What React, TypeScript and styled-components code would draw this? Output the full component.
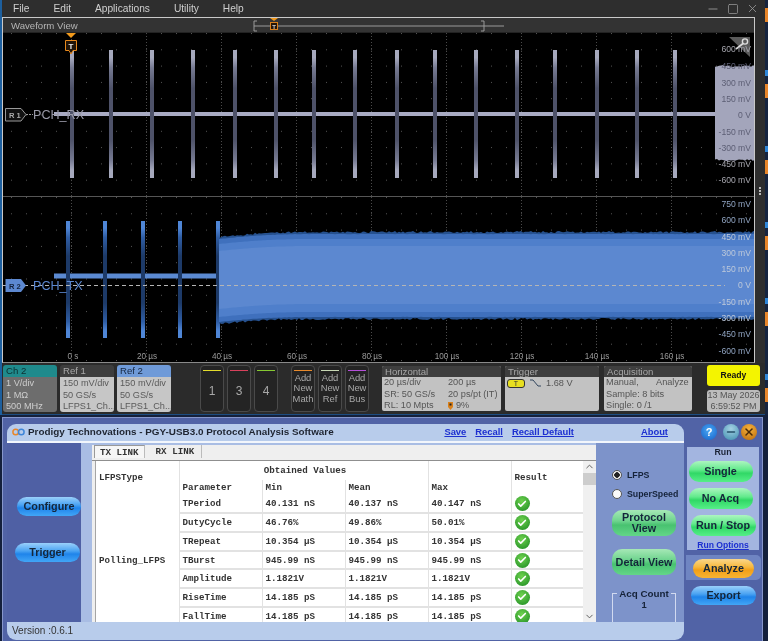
import styled, { createGlobalStyle } from "styled-components";
import { Check, ChevronDown, ChevronUp, Minus, Square, X } from "lucide-react";

const GlobalStyle = createGlobalStyle`
  html, body { margin: 0; padding: 0; background: #14203c; }
  * { box-sizing: border-box; }
`;

const Screen = styled.div`
  width: 768px;
  height: 641px;
  overflow: hidden;
  background: #14203c;
  font-family: "Liberation Sans", Arial, sans-serif;
  filter: blur(0.4px);
`;

/* ---------- scope window ---------- */
const TopRow = styled.div`
  display: flex;
  height: 415px;
`;

const ScopeWindow = styled.div`
  width: 765px;
  display: flex;
  flex-direction: column;
  background: #2e2e2e;
  border-left: 2px solid #1d5f9e;
`;

const DesktopStrip = styled.div`
  flex: 1;
  background: repeating-linear-gradient(
    180deg,
    #16243f 0 8px,
    #e8862a 8px 22px,
    #16243f 22px 70px,
    #2f86d8 70px 76px
  );
`;

const MenuBar = styled.div`
  height: 17px;
  display: flex;
  align-items: center;
  gap: 24px;
  padding: 0 6px 0 11px;
  color: #cfcfcf;
  font-size: 10.2px;
`;

const WindowControls = styled.div`
  margin-left: auto;
  display: flex;
  align-items: center;
  gap: 7px;
  color: #9a9a9a;
`;

const ScopeMiddle = styled.div`
  display: flex;
  height: 346px;
`;

const WavePanel = styled.div`
  width: 753px;
  display: flex;
  flex-direction: column;
  border: 1px solid #c9c9c9;
  border-bottom-color: #8a8a8a;
  background: #000;
`;

const WaveTitle = styled.div`
  height: 15px;
  flex: none;
  display: flex;
  align-items: center;
  padding-left: 8px;
  background: #333;
  color: #b5b5b5;
  font-size: 9.6px;
  border-bottom: 1px solid #222;
`;

const Overview = styled.svg`
  margin-left: 175px;
`;

const PlotSvg = styled.svg`
  display: block;
  flex: none;
`;

const PlotDivider = styled.div`
  height: 1px;
  flex: none;
  background: #555;
`;

const Gutter = styled.div`
  flex: 1;
  display: flex;
  flex-direction: column;
  align-items: center;
  justify-content: flex-end;
  gap: 1px;
  padding-bottom: 168px;
`;

const GutterDot = styled.span`
  width: 2px;
  height: 2px;
  background: #bbb;
`;

/* ---------- status strip under the waveforms ---------- */
const StatusStrip = styled.div`
  height: 52px;
  display: flex;
  align-items: center;
  padding-left: 1px;
  background: #2b2b2b;
  border-bottom: 1px solid #1c4c80;
  color: #555;
  font-size: 9.2px;
`;

const BadgeGroup = styled.div<{ $left?: number; $gap?: number }>`
  display: flex;
  gap: ${(p) => p.$gap ?? 3}px;
  margin-left: ${(p) => p.$left ?? 0}px;
`;

const Badge = styled.div`
  width: 54px;
  height: 47px;
  border-radius: 3px;
  overflow: hidden;
  display: flex;
  flex-direction: column;
`;

const BadgeHead = styled.div<{ $bg: string; $color: string }>`
  height: 12px;
  padding: 0 3px;
  background: ${(p) => p.$bg};
  color: ${(p) => p.$color};
  line-height: 12px;
  font-size: 9.6px;
`;

const BadgeBody = styled.div<{ $dark?: boolean }>`
  flex: 1;
  padding: 1px 3px 0;
  background: ${(p) => (p.$dark ? "#6d6d6d" : "#c6c6c6")};
  color: ${(p) => (p.$dark ? "#cdcdcd" : "#5a5a5a")};
  line-height: 11.5px;
  white-space: nowrap;
  overflow: hidden;
  display: flex;
  flex-direction: column;
`;

const ChannelKey = styled.button<{ $bar: string }>`
  width: 24px;
  height: 47px;
  padding: 4px 2px 0;
  border: 1px solid #4a4a4a;
  border-radius: 4px;
  background: #242424;
  color: #a8a8a8;
  font: inherit;
  display: flex;
  flex-direction: column;
  align-items: center;
  text-align: center;

  &::before {
    content: "";
    width: 18px;
    height: 1px;
    flex: none;
    background: ${(p) => p.$bar};
  }
`;

const KeyNumber = styled.span`
  margin-top: 13px;
  font-size: 12px;
`;

const KeyLabel = styled.span`
  margin-top: 2px;
  font-size: 9.4px;
  line-height: 10.4px;
`;

const InfoPanel = styled.div<{ $w: number; $left: number }>`
  width: ${(p) => p.$w}px;
  height: 45px;
  margin-left: ${(p) => p.$left}px;
  border-radius: 2px;
  overflow: hidden;
  background: #c2c2c2;
  display: flex;
  flex-direction: column;
`;

const InfoHead = styled.div`
  height: 11px;
  padding: 0 3px;
  background: #3e3e3e;
  color: #a6a6a6;
  font-size: 9.6px;
  line-height: 11px;
`;

const InfoGrid = styled.div<{ $cols: string }>`
  display: grid;
  grid-template-columns: ${(p) => p.$cols};
  grid-auto-rows: 11.5px;
  padding: 0 2px;
  line-height: 11.5px;
  white-space: nowrap;
`;

const InfoCell = styled.span`
  display: flex;
  align-items: center;
  gap: 3px;
`;

const TriggerRow = styled.div`
  display: flex;
  align-items: center;
  padding: 1px 2px 0;
  gap: 5px;
`;

const TriggerPill = styled.span`
  width: 18px;
  height: 9px;
  border: 1px solid #333;
  border-radius: 3px;
  background: #e8df20;
  color: #333;
  font-size: 7px;
  line-height: 7px;
  text-align: center;
`;

const ReadyColumn = styled.div`
  width: 53px;
  margin-left: 15px;
  display: flex;
  flex-direction: column;
  gap: 4px;
`;

const ReadyBox = styled.div`
  height: 21px;
  border-radius: 3px;
  background: #f4f400;
  color: #111;
  font-size: 8.6px;
  font-weight: bold;
  line-height: 21px;
  text-align: center;
`;

const ClockBox = styled.div`
  height: 22px;
  border-radius: 3px;
  background: #bcbcbc;
  font-size: 9px;
  line-height: 11px;
  text-align: center;
  white-space: nowrap;
`;

/* ---------- protocol analysis window ---------- */
const ProdigyWindow = styled.div`
  width: 761px;
  height: 224px;
  margin: 2px 0 0 2px;
  padding: 6px 0 0 4px;
  display: flex;
  background: #5163a6;
  border: 1px solid #8696cb;
  border-bottom: none;
`;

const Client = styled.div`
  width: 677px;
  height: 216px;
  flex: none;
  display: flex;
  flex-direction: column;
  border-radius: 9px;
  overflow: hidden;
  background: #b8cceb;
`;

const TitleBar = styled.div`
  height: 19px;
  flex: none;
  display: flex;
  align-items: center;
  padding: 0 16px 2px 5px;
  border-bottom: 2px solid #f2f6fc;
`;

const AppTitle = styled.span`
  margin-left: 3px;
  color: #1e2430;
  font-size: 9.9px;
  font-weight: bold;
  white-space: nowrap;
`;

const TopLinks = styled.div`
  margin-left: auto;
  display: flex;
  gap: 9px;
`;

const LinkText = styled.a<{ $left?: number }>`
  margin-left: ${(p) => p.$left ?? 0}px;
  color: #1c2fd0;
  font-size: 9.4px;
  font-weight: bold;
  text-decoration: underline;
  white-space: nowrap;
`;

const ClientBody = styled.div`
  height: 179px;
  flex: none;
  display: flex;
  background: #a9bde4;
`;

const SideBar = styled.div`
  width: 74px;
  flex: none;
  display: flex;
  flex-direction: column;
  align-items: flex-start;
  padding: 54px 0 0 8px;
  gap: 27px;
  background: #4f60a4;
`;

const GlossButton = styled.button<{ $tone: "blue" | "green" | "bright" | "orange"; $w: number; $h?: number; $shift?: number }>`
  width: ${(p) => p.$w}px;
  height: ${(p) => p.$h ?? 19}px;
  flex: none;
  padding: 0;
  margin-left: ${(p) => p.$shift ?? 0}px;
  border: none;
  border-radius: 10px;
  color: #14263a;
  font-family: inherit;
  font-size: 10.8px;
  font-weight: bold;
  line-height: 11px;
  text-align: center;
  background: ${(p) =>
    p.$tone === "blue"
      ? "linear-gradient(#9ad0fb 0, #4aa3f2 42%, #1f84ea 58%, #42a6f6 100%)"
      : p.$tone === "green"
        ? "linear-gradient(#a6e8b6 0, #6fd48f 42%, #48c270 58%, #63d688 100%)"
        : p.$tone === "bright"
          ? "linear-gradient(#adf5c0 0, #62ea8c 42%, #31d866 58%, #56ef88 100%)"
          : "linear-gradient(#fbd78a 0, #f7b93f 42%, #f29f18 58%, #f8b432 100%)"};
`;

const Margin = styled.div`
  width: 11px;
  flex: none;
`;

const TabPanel = styled.div`
  width: 504px;
  flex: none;
  margin-top: 2px;
  display: flex;
  flex-direction: column;
  background: #efefef;
`;

const TabRow = styled.div`
  height: 16px;
  flex: none;
  display: flex;
  padding: 0 0 0 2px;
  gap: 4px;
  border-bottom: 1px solid #8f8f8f;
`;

const Tab = styled.span<{ $active?: boolean }>`
  height: 13px;
  padding: 0 ${(p) => (p.$active ? 5 : 7)}px;
  border-top: ${(p) => (p.$active ? "1px solid #999" : "none")};
  border-left: ${(p) => (p.$active ? "1px solid #999" : "none")};
  border-right: 1px solid #bbb;
  background: ${(p) => (p.$active ? "#f6f6f6" : "transparent")};
  color: #333;
  font-family: "Liberation Mono", "Courier New", monospace;
  font-size: 9.2px;
  font-weight: bold;
  line-height: 13px;
`;

const TableArea = styled.div`
  margin-left: 3px;
  height: 161px;
  display: flex;
  background: #fff;
  border-left: 1px solid #a5a5a5;
  overflow: hidden;
`;

const DataTable = styled.table`
  width: 487px;
  flex: none;
  table-layout: fixed;
  align-self: flex-start;
  border-collapse: collapse;
  color: #333;
  font-family: "Liberation Mono", "Courier New", monospace;
  font-size: 9.2px;
  font-weight: bold;
`;

const Cell = styled.td<{ $h?: number; $center?: boolean; $top?: number }>`
  height: ${(p) => p.$h ?? 18.7}px;
  padding: ${(p) => p.$top ?? 0}px 0 0 3px;
  text-align: ${(p) => (p.$center ? "center" : "left")};
  vertical-align: middle;
  border-left: 1px solid #e2e2e2;
  border-bottom: 2px solid #e2e2e2;
  white-space: nowrap;
`;

const HeadCell = styled(Cell)`
  border-bottom: none;
`;

const SpanCell = styled(Cell)`
  border-left: none;
  border-bottom: none;
`;

const PassDot = styled.span`
  display: block;
  width: 15px;
  height: 15px;
  border-radius: 50%;
  display: flex;
  align-items: center;
  justify-content: center;
  background: radial-gradient(circle at 45% 35%, #6fd24f, #2e9a2c 75%);
  color: #fff;
`;

const ScrollTrack = styled.div`
  width: 13px;
  flex: none;
  display: flex;
  flex-direction: column;
  align-items: center;
  background: #f0f0f0;
  color: #555;
`;

const ScrollThumb = styled.div`
  width: 100%;
  height: 12px;
  margin-top: 1px;
  background: #cdcdcd;
`;

const ScrollFill = styled.div`
  flex: 1;
`;

const OptionsPanel = styled.div`
  width: 88px;
  flex: none;
  overflow: hidden;
  display: flex;
  flex-direction: column;
  align-items: flex-start;
  padding: 27px 0 0 16px;
  background: #7d93ca;
`;

const RadioRow = styled.label<{ $gap?: number }>`
  display: flex;
  align-items: center;
  gap: 5px;
  margin-bottom: ${(p) => p.$gap ?? 0}px;
  color: #15233a;
  font-size: 8.8px;
  font-weight: bold;
`;

const RadioMark = styled.span<{ $on?: boolean }>`
  width: 10px;
  height: 10px;
  flex: none;
  border-radius: 50%;
  border: 1px solid #555;
  background: ${(p) => (p.$on ? "radial-gradient(circle, #222 0 2.5px, #f4f4f4 3px)" : "#fafafa")};
`;

const AcqFieldset = styled.fieldset`
  width: 64px;
  height: 40px;
  flex: none;
  margin: 13px 0 0;
  padding: 0;
  border: 1px solid #d2daf0;
  text-align: center;
  color: #152238;
  font-size: 9.4px;
  font-weight: bold;
`;

const AcqLegend = styled.legend`
  margin: 0 auto;
  padding: 0 2px;
  font-size: 9.8px;
  white-space: nowrap;
`;

const StatusBar = styled.div`
  height: 18px;
  flex: none;
  padding-left: 5px;
  color: #333;
  font-size: 10px;
  line-height: 18px;
`;

const RightColumn = styled.div`
  flex: 1;
  display: flex;
  flex-direction: column;
  align-items: flex-start;
`;

const HelpRow = styled.div`
  height: 23px;
  flex: none;
  display: flex;
  align-items: flex-start;
  padding: 0 0 0 17px;
`;

const RoundIcon = styled.span<{ $bg: string; $left?: number }>`
  width: 16px;
  height: 16px;
  margin-left: ${(p) => p.$left ?? 0}px;
  border-radius: 50%;
  display: flex;
  align-items: center;
  justify-content: center;
  background: ${(p) => p.$bg};
  color: #fff;
  font-size: 11px;
  font-weight: bold;
`;

const RunPanel = styled.div`
  width: 72px;
  height: 103px;
  margin-left: 3px;
  padding-top: 1px;
  display: flex;
  flex-direction: column;
  align-items: center;
  background: #a3b5e0;
  color: #1b2436;
  font-size: 8.8px;
`;

const RunTitle = styled.span`
  height: 13px;
  line-height: 9px;
  font-weight: bold;
`;

const RunStack = styled.div`
  display: flex;
  flex-direction: column;
  gap: 6px;
`;

const RunOptions = styled(LinkText)`
  margin-top: 4px;
  font-size: 8.6px;
`;

const AnalyzeBand = styled.div`
  width: 75px;
  height: 25px;
  margin: 5px 0 0 2px;
  padding: 3px 0 0 7px;
  border-radius: 0 5px 5px 0;
  background: #6f85c2;
`;

/* ---------- waveform drawing helpers ---------- */
const noise = (i: number) => {
  const v = Math.sin(i * 12.9898) * 43758.5453;
  return v - Math.floor(v);
};

const edge = (x0: number, x1: number, y0: number, y1: number, seed: number, amp: number) => {
  const pts: string[] = [];
  for (let x = x0; x <= x1; x += 2) {
    const t = Math.min(1, (x - x0) / 90);
    const base = y0 + (y1 - y0) * t * (2 - t);
    pts.push(`${x},${(base + (noise(x + seed) - 0.5) * amp).toFixed(1)}`);
  }
  return pts;
};

const band = (top: [number, number], bottom: [number, number], amp: number, seed: number) => {
  const a = edge(219, 755, top[0], top[1], seed, amp);
  const b = edge(219, 755, bottom[0], bottom[1], seed + 7, amp).reverse();
  return [...a, ...b].join(" ");
};

const gridLines = [71, 146, 221, 296, 371, 446, 521, 596, 671];

function PlotGrid({ id, y, h }: { id: string; y: number; h: number }) {
  return (
    <>
      <defs>
        <pattern id={id} x="11" y={y % 16.3} width="15" height="16.3" patternUnits="userSpaceOnUse">
          <rect width="1" height="1" fill="#555" />
        </pattern>
      </defs>
      <rect x="2" y={y} width="753" height={h} fill={`url(#${id})`} />
      {gridLines.map((x) => (
        <line key={x} x1={x + 0.5} x2={x + 0.5} y1={y} y2={y + h} stroke="#4a4a4a" strokeDasharray="1 2" />
      ))}
    </>
  );
}

function PulseGradient({ id, end, mid, dark }: { id: string; end: string; mid: string; dark: string }) {
  return (
    <linearGradient id={id} x1="0" x2="0" y1="0" y2="1">
      <stop offset="0" stopColor={end} />
      <stop offset="0.06" stopColor={end} />
      <stop offset="0.14" stopColor={mid} />
      <stop offset="0.3" stopColor={dark} />
      <stop offset="0.7" stopColor={dark} />
      <stop offset="0.86" stopColor={mid} />
      <stop offset="0.94" stopColor={end} />
      <stop offset="1" stopColor={end} />
    </linearGradient>
  );
}

const rxPulses = [72, 111, 152, 193, 235, 276, 314, 355, 397, 435, 476, 517, 555, 597, 637, 675];
const rxLabels: [string, number, string][] = [
  ["600 mV", 53, "#a5a5ad"],
  ["450 mV", 70, "#5c5e74"],
  ["300 mV", 87, "#5c5e74"],
  ["150 mV", 103, "#5c5e74"],
  ["0 V", 119, "#5c5e74"],
  ["-150 mV", 136, "#5c5e74"],
  ["-300 mV", 152, "#5c5e74"],
  ["-450 mV", 168, "#a5a5ad"],
  ["-600 mV", 184, "#a5a5ad"],
];

function RxPlot() {
  return (
    <PlotSvg width="751" height="163" viewBox="3 34 751 163">
      <defs>
        <PulseGradient id="rxPulse" end="#a6a9bd" mid="#767a92" dark="#4e5269" />
      </defs>
      <PlotGrid id="rxDots" y={34} h={163} />
      <rect x="54" y="113" width="662" height="4" fill="#a9abc3" />
      {rxPulses.map((x) => (
        <rect key={x} x={x - 2} y="51" width="4" height="128" fill="url(#rxPulse)" />
      ))}
      <polygon
        points={[...edge(715, 755, 67, 67, 3, 2), ...edge(715, 755, 161, 161, 9, 2).reverse()].join(" ")}
        fill="#a3a5bb"
      />
      <polygon points="729,38 750,38 750,58" fill="#5a5a5a" />
      <circle cx="745" cy="42.5" r="2.6" fill="none" stroke="#ddd" strokeWidth="1.4" />
      <line x1="743" y1="44.5" x2="736" y2="50" stroke="#ddd" strokeWidth="1.6" />
      {rxLabels.map(([t, y, c]) => (
        <text key={t} x="751" y={y} textAnchor="end" fontSize="8.6" fill={c} fontFamily="Liberation Sans">
          {t}
        </text>
      ))}
      <polygon points="65,33 77,33 71,39" fill="#f29a1c" />
      <path d="M65.5 41.5h11v10h-3.5l-2 3.5-2-3.5h-3.5z" fill="#201408" stroke="#e8891c" />
      <text x="71" y="49.5" textAnchor="middle" fontSize="8" fontWeight="bold" fill="#eee" fontFamily="Liberation Sans">
        T
      </text>
      <polygon points="5.5,109.5 21,109.5 26,115.5 21,122 5.5,122" fill="#111" stroke="#999" />
      <text x="9" y="119" fontSize="7.6" fontWeight="bold" fill="#aaa" fontFamily="Liberation Sans">
        R 1
      </text>
      <line x1="26" y1="115.5" x2="33" y2="115.5" stroke="#999" strokeDasharray="2 1" />
      <text x="33" y="120" fontSize="12.6" fill="#9a9aa8" fontFamily="Liberation Sans">
        PCH_RX
      </text>
    </PlotSvg>
  );
}

const txPulses = [68, 105, 143, 180, 218];
const txLabels: [string, number][] = [
  ["750 mV", 208],
  ["600 mV", 224],
  ["450 mV", 241],
  ["300 mV", 257],
  ["150 mV", 273],
  ["0 V", 289],
  ["-150 mV", 306],
  ["-300 mV", 322],
  ["-450 mV", 338],
  ["-600 mV", 355],
];
const timeLabels = ["0 s", "20 µs", "40 µs", "60 µs", "80 µs", "100 µs", "120 µs", "140 µs", "160 µs"];

function TxPlot() {
  return (
    <PlotSvg width="751" height="165" viewBox="3 198 751 165">
      <defs>
        <PulseGradient id="txPulse" end="#4f86d6" mid="#2f5da4" dark="#1d3a68" />
      </defs>
      <PlotGrid id="txDots" y={198} h={165} />
      <rect x="54" y="274.5" width="165" height="5" fill="#5b8ad2" />
      {txPulses.map((x) => (
        <rect key={x} x={x - 2} y="222" width="4" height="117" fill="url(#txPulse)" />
      ))}
      <polygon points={band([238, 233], [325, 320], 2, 11)} fill="#26518f" />
      <polygon points={band([240, 235], [323, 318], 0.4, 21)} fill="#3f70bd" />
      <polygon points={band([245, 240], [318, 313], 0, 0)} fill="#4f7fcb" />
      <polygon points={band([252, 247], [310, 305], 0, 0)} fill="#5c88d0" />
      <line x1="3" x2="725" y1="286.5" y2="286.5" stroke="#b5b5b5" strokeDasharray="4 3" />
      {txLabels.map(([t, y]) => (
        <text key={t} x="751" y={y} textAnchor="end" fontSize="8.6" fill={y > 325 || y < 235 ? "#8fa3c0" : "#bcc8da"} fontFamily="Liberation Sans">
          {t}
        </text>
      ))}
      {timeLabels.map((t, i) => (
        <text key={t} x={gridLines[i] + (i === 0 ? 2 : 1)} y="360" textAnchor="middle" fontSize="8.2" fill="#9a9a9a" fontFamily="Liberation Sans">
          {t}
        </text>
      ))}
      <polygon points="5.5,280 21,280 26,286.5 21,293 5.5,293" fill="#5c88d0" />
      <text x="9" y="290" fontSize="7.6" fontWeight="bold" fill="#14233c" fontFamily="Liberation Sans">
        R 2
      </text>
      <text x="33" y="291" fontSize="12.6" fill="#5c88d0" fontFamily="Liberation Sans">
        PCH_TX
      </text>
    </PlotSvg>
  );
}

/* ---------- table data ---------- */
const measurements = [
  ["TPeriod", "40.131 nS", "40.137 nS", "40.147 nS"],
  ["DutyCycle", "46.76%", "49.86%", "50.01%"],
  ["TRepeat", "10.354 µS", "10.354 µS", "10.354 µS"],
  ["TBurst", "945.99 nS", "945.99 nS", "945.99 nS"],
  ["Amplitude", "1.1821V", "1.1821V", "1.1821V"],
  ["RiseTime", "14.185 pS", "14.185 pS", "14.185 pS"],
  ["FallTime", "14.185 pS", "14.185 pS", "14.185 pS"],
];

export default function App() {
  return (
    <Screen>
      <GlobalStyle />
      <TopRow>
        <ScopeWindow>
          <MenuBar>
            <span>File</span>
            <span>Edit</span>
            <span>Applications</span>
            <span>Utility</span>
            <span>Help</span>
            <WindowControls>
              <Minus size={14} strokeWidth={1.5} />
              <Square size={12} strokeWidth={1.5} />
              <X size={13} strokeWidth={1.5} />
            </WindowControls>
          </MenuBar>
          <ScopeMiddle>
            <WavePanel>
              <WaveTitle>
                Waveform View
                <Overview width="252" height="15" viewBox="0 0 252 15">
                  <path d="M4 3H1v10h3M1 8h250M228 3h3v10h-3" fill="none" stroke="#9a9a9a" />
                  <polygon points="17,0 25,0 21,3" fill="#f29a1c" />
                  <rect x="17.5" y="4.5" width="7" height="7" fill="#241608" stroke="#d9801a" />
                  <text x="21" y="10.5" textAnchor="middle" fontSize="6" fontWeight="bold" fill="#ccc" fontFamily="Liberation Sans">
                    T
                  </text>
                </Overview>
              </WaveTitle>
              <RxPlot />
              <PlotDivider />
              <TxPlot />
            </WavePanel>
            <Gutter>
              <GutterDot />
              <GutterDot />
              <GutterDot />
            </Gutter>
          </ScopeMiddle>
          <StatusStrip>
            <BadgeGroup>
              <Badge>
                <BadgeHead $bg="#1f8a8c" $color="#0d2f30">Ch 2</BadgeHead>
                <BadgeBody $dark>
                  <span>1 V/div</span>
                  <span>1 MΩ</span>
                  <span>500 MHz</span>
                </BadgeBody>
              </Badge>
              <Badge>
                <BadgeHead $bg="#3d3d3d" $color="#a8a8a8">Ref 1</BadgeHead>
                <BadgeBody>
                  <span>150 mV/div</span>
                  <span>50 GS/s</span>
                  <span>LFPS1_Ch...</span>
                </BadgeBody>
              </Badge>
              <Badge>
                <BadgeHead $bg="#6f9ad8" $color="#16263f">Ref 2</BadgeHead>
                <BadgeBody>
                  <span>150 mV/div</span>
                  <span>50 GS/s</span>
                  <span>LFPS1_Ch...</span>
                </BadgeBody>
              </Badge>
            </BadgeGroup>
            <BadgeGroup $left={29}>
              <ChannelKey $bar="#e4dc2c"><KeyNumber>1</KeyNumber></ChannelKey>
              <ChannelKey $bar="#d8415c"><KeyNumber>3</KeyNumber></ChannelKey>
              <ChannelKey $bar="#86c832"><KeyNumber>4</KeyNumber></ChannelKey>
            </BadgeGroup>
            <BadgeGroup $left={13}>
              <ChannelKey $bar="#e88a2c"><KeyLabel>Add New Math</KeyLabel></ChannelKey>
              <ChannelKey $bar="#c8d8b4"><KeyLabel>Add New Ref</KeyLabel></ChannelKey>
              <ChannelKey $bar="#b44fd8"><KeyLabel>Add New Bus</KeyLabel></ChannelKey>
            </BadgeGroup>
            <InfoPanel $w={119} $left={13}>
              <InfoHead>Horizontal</InfoHead>
              <InfoGrid $cols="64px 1fr">
                <InfoCell>20 µs/div</InfoCell>
                <InfoCell>200 µs</InfoCell>
                <InfoCell>SR: 50 GS/s</InfoCell>
                <InfoCell>20 ps/pt (IT)</InfoCell>
                <InfoCell>RL: 10 Mpts</InfoCell>
                <InfoCell>
                  <svg width="5" height="8" viewBox="0 0 5 8">
                    <path d="M0 0h5v5L2.5 8 0 5z" fill="#d9801a" />
                    <rect x="1.5" y="1.5" width="2" height="2" fill="#222" />
                  </svg>
                  9%
                </InfoCell>
              </InfoGrid>
            </InfoPanel>
            <InfoPanel $w={94} $left={4}>
              <InfoHead>Trigger</InfoHead>
              <TriggerRow>
                <TriggerPill>T</TriggerPill>
                <svg width="11" height="8" viewBox="0 0 11 8">
                  <path d="M0 1h3l5 6h3" fill="none" stroke="#33465f" />
                </svg>
                <span>1.68 V</span>
              </TriggerRow>
            </InfoPanel>
            <InfoPanel $w={88} $left={5}>
              <InfoHead>Acquisition</InfoHead>
              <InfoGrid $cols="50px 1fr">
                <InfoCell>Manual,</InfoCell>
                <InfoCell>Analyze</InfoCell>
                <InfoCell>Sample: 8 bits</InfoCell>
                <InfoCell />
                <InfoCell>Single: 0 /1</InfoCell>
              </InfoGrid>
            </InfoPanel>
            <ReadyColumn>
              <ReadyBox>Ready</ReadyBox>
              <ClockBox>13 May 2026<br />6:59:52 PM</ClockBox>
            </ReadyColumn>
          </StatusStrip>
        </ScopeWindow>
        <DesktopStrip />
      </TopRow>

      <ProdigyWindow>
        <Client>
          <TitleBar>
            <svg width="13" height="8" viewBox="0 0 13 8">
              <circle cx="3.7" cy="4" r="2.8" fill="none" stroke="#e8862a" strokeWidth="1.5" />
              <circle cx="9.3" cy="4" r="2.8" fill="none" stroke="#3f86d8" strokeWidth="1.5" />
            </svg>
            <AppTitle>Prodigy Technovations - PGY-USB3.0 Protocol Analysis Software</AppTitle>
            <TopLinks>
              <LinkText>Save</LinkText>
              <LinkText>Recall</LinkText>
              <LinkText>Recall Default</LinkText>
              <LinkText $left={58}>About</LinkText>
            </TopLinks>
          </TitleBar>
          <ClientBody>
            <SideBar>
              <GlossButton $tone="blue" $w={64} $shift={2}>Configure</GlossButton>
              <GlossButton $tone="blue" $w={65}>Trigger</GlossButton>
            </SideBar>
            <Margin />
            <TabPanel>
              <TabRow>
                <Tab $active>TX LINK</Tab>
                <Tab>RX LINK</Tab>
              </TabRow>
              <TableArea>
                <DataTable>
                  <colgroup>
                    <col width="83" />
                    <col width="83" />
                    <col width="83" />
                    <col width="83" />
                    <col width="83" />
                    <col width="72" />
                  </colgroup>
                  <tbody>
                    <tr>
                      <SpanCell as="td" rowSpan={2} $h={31}>LFPSType</SpanCell>
                      <HeadCell colSpan={3} $h={16} $center>Obtained Values</HeadCell>
                      <HeadCell />
                      <HeadCell rowSpan={2} $h={31}>Result</HeadCell>
                    </tr>
                    <tr>
                      <HeadCell $h={15}>Parameter</HeadCell>
                      <HeadCell $h={15}>Min</HeadCell>
                      <HeadCell $h={15}>Mean</HeadCell>
                      <HeadCell $h={15}>Max</HeadCell>
                    </tr>
                    {measurements.map((row, i) => (
                      <tr key={row[0]}>
                        {i === 0 && <SpanCell rowSpan={7}>Polling_LFPS</SpanCell>}
                        {row.map((value) => (
                          <Cell key={value + row[0]}>{value}</Cell>
                        ))}
                        <Cell>
                          <PassDot>
                            <Check size={10} strokeWidth={4} />
                          </PassDot>
                        </Cell>
                      </tr>
                    ))}
                  </tbody>
                </DataTable>
                <ScrollTrack>
                  <ChevronUp size={11} strokeWidth={2} />
                  <ScrollThumb />
                  <ScrollFill />
                  <ChevronDown size={11} strokeWidth={2} />
                </ScrollTrack>
              </TableArea>
            </TabPanel>
            <OptionsPanel>
              <RadioRow $gap={9}><RadioMark $on />LFPS</RadioRow>
              <RadioRow $gap={11}><RadioMark />SuperSpeed</RadioRow>
              <GlossButton $tone="green" $w={64} $h={26}>Protocol<br />View</GlossButton>
              <GlossButton $tone="green" $w={64} $h={26} style={{ marginTop: 13 }}>Detail View</GlossButton>
              <AcqFieldset>
                <AcqLegend>Acq Count</AcqLegend>
                1
              </AcqFieldset>
            </OptionsPanel>
          </ClientBody>
          <StatusBar>Version :0.6.1</StatusBar>
        </Client>
        <RightColumn>
          <HelpRow>
            <RoundIcon $bg="radial-gradient(circle at 50% 40%, #4aa8f4, #1560c8)">?</RoundIcon>
            <RoundIcon $bg="radial-gradient(circle at 50% 30%, #a5d2e4, #3d8cae)" $left={6}>
              <Minus size={12} strokeWidth={3} color="#24506a" />
            </RoundIcon>
            <RoundIcon $bg="radial-gradient(circle at 50% 30%, #f6b23c, #b96a0c)" $left={2}>
              <X size={12} strokeWidth={3} color="#4a2a08" />
            </RoundIcon>
          </HelpRow>
          <RunPanel>
            <RunTitle>Run</RunTitle>
            <RunStack>
              <GlossButton $tone="bright" $w={64} $h={21} $shift={-2}>Single</GlossButton>
              <GlossButton $tone="bright" $w={64} $h={21} $shift={-2}>No Acq</GlossButton>
              <GlossButton $tone="bright" $w={65} $h={21}>Run / Stop</GlossButton>
            </RunStack>
            <RunOptions>Run Options</RunOptions>
          </RunPanel>
          <AnalyzeBand>
            <GlossButton $tone="orange" $w={61}>Analyze</GlossButton>
          </AnalyzeBand>
          <GlossButton $tone="blue" $w={65} style={{ marginTop: 6, marginLeft: 7 }}>Export</GlossButton>
        </RightColumn>
      </ProdigyWindow>
    </Screen>
  );
}
